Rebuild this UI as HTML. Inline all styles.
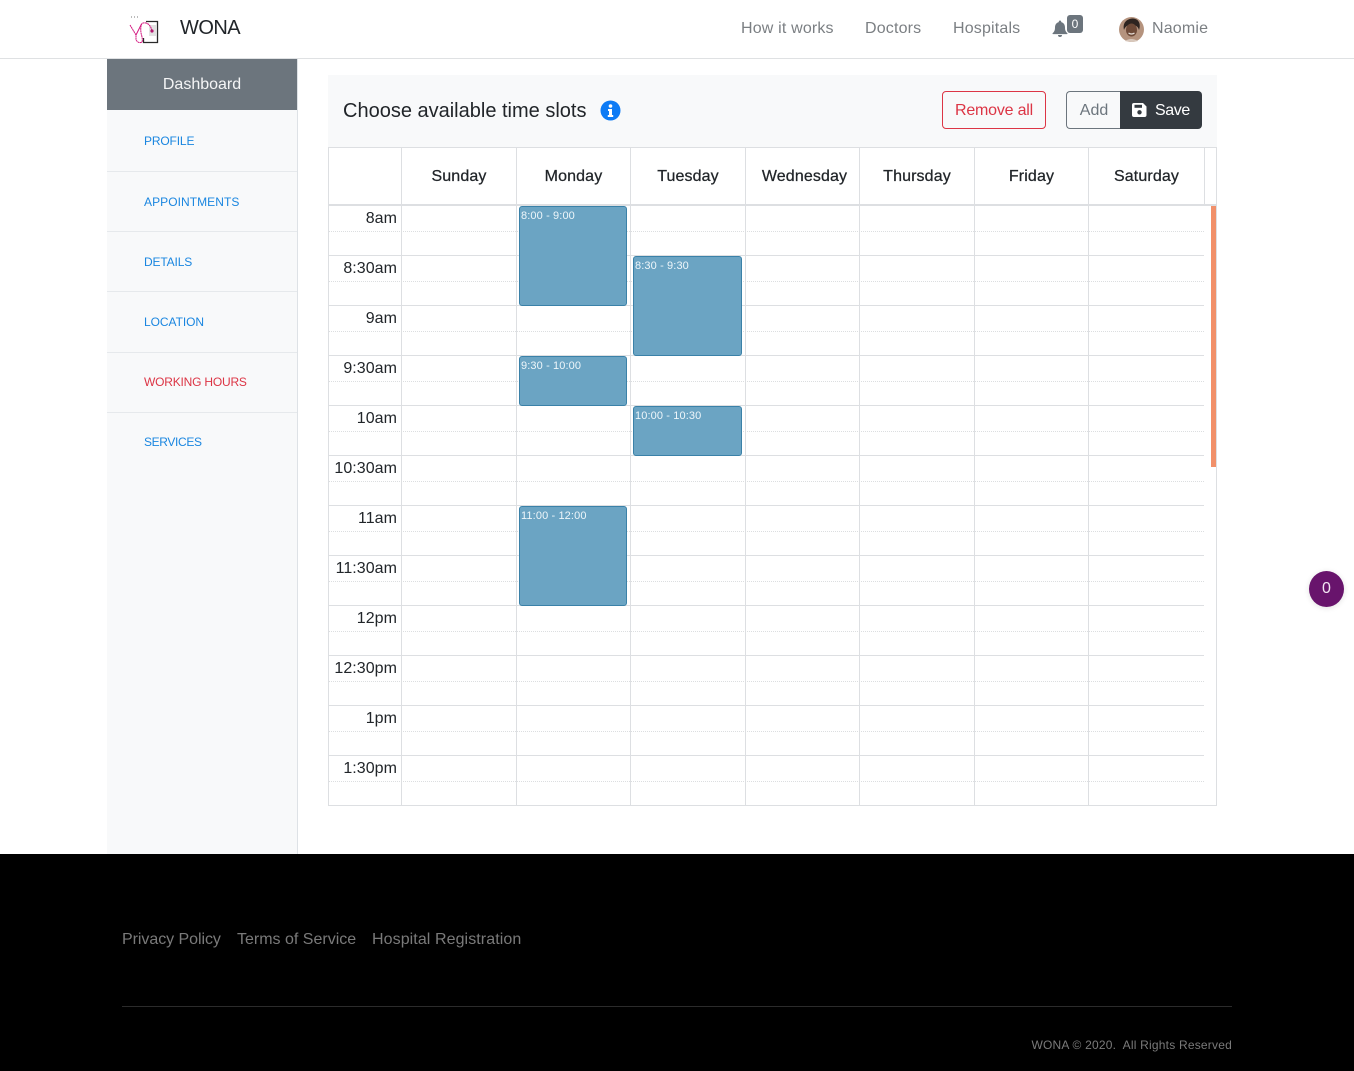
<!DOCTYPE html>
<html><head><meta charset="utf-8"><title>WONA</title>
<style>
*{box-sizing:border-box}
html,body{margin:0;padding:0}
body{width:1354px;height:1071px;position:relative;overflow:hidden;background:#fff;font-family:"Liberation Sans",sans-serif;color:#212529}
.a{position:absolute;white-space:nowrap;line-height:20px}
.nav{color:#7b7f83;font-size:16px;top:19px;letter-spacing:.17px}
.side{font-size:12px;left:144px;color:#1a86e0;letter-spacing:-.15px}
.day{top:167px;font-size:16px;text-align:center;color:#212529;-webkit-text-stroke:.25px #212529;letter-spacing:.12px}
.t{left:329px;width:68px;text-align:right;font-size:16px;color:#212529;letter-spacing:.05px}
.ev{position:absolute;background:#6ba4c3;border:1px solid #3a81a8;border-radius:3px;color:#eef6fa;font-size:11px;line-height:13px;padding:3px 1px 0;white-space:nowrap;letter-spacing:.12px}
.d{position:absolute;left:107px;width:190px;height:1px;background:#e6e9ec}
.f{color:#7a7a7a;font-size:16px;top:930px}
</style></head><body>

<!-- navbar -->
<div class="a" style="left:0;top:58px;width:1354px;height:1px;background:#dfe1e3"></div>
<svg class="a" style="left:128px;top:15px" width="32" height="30" viewBox="0 0 32 30">
<path d="M18 6.500H29.500V27.500H15.500V23" fill="none" stroke="#2a2a2a" stroke-width="1.300"/>
<rect x="21" y="10" width="7" height="11" fill="#e2e2e2"/>
<path d="M2 10 L8 20 V25 Q11 29 14 27 Q15 25 13 18 Q12 9 15 8 Q22 7 24 16" fill="none" stroke="#d3167f" stroke-width="1" stroke-dasharray="2 .4"/>
<path d="M13.500 9 L8 20" fill="none" stroke="#d3167f" stroke-width="1"/>
<circle cx="24" cy="16" r="1.600" fill="#b3186f"/>
<path d="M3 2h1M6 2h1M9 2h1" stroke="#777" stroke-width="1"/>
</svg>
<div class="a" style="left:180px;top:18px;font-size:20px;color:#212529;letter-spacing:-.55px">WONA</div>
<div class="a nav" style="left:741px;">How it works</div>
<div class="a nav" style="left:865px;">Doctors</div>
<div class="a nav" style="left:953px;">Hospitals</div>
<svg class="a" style="left:1052px;top:20px" width="16" height="17" viewBox="0 0 16 17"><path d="M8 0.500a1.300 1.300 0 0 1 1.200 1.600C11.700 2.700 13 4.800 13 7.500c0 3 .8 4.300 2.300 5.600.4.400.2 1-.3 1H1c-.5 0-.7-.6-.3-1C2.200 11.800 3 10.500 3 7.500 3 4.800 4.300 2.700 6.800 2.100A1.300 1.300 0 0 1 8 .5zM6 15h4a2 2 0 0 1-4 0z" fill="#6c757d"/></svg>
<div class="a" style="left:1067px;top:15px;width:16px;height:18px;background:#6c757d;border-radius:3px;color:#fff;font-size:12px;text-align:center;line-height:18px">0</div>
<svg class="a" style="left:1119px;top:17px" width="25" height="25" viewBox="0 0 25 25">
<circle cx="12.500" cy="12.500" r="12.500" fill="#b5937e"/>
<path d="M5 13C3 4 10 1.500 14 1.500 20 2 22 7 20 13 19 9 16 8 12 8 8 8 6 10 5 13z" fill="#2e2420"/>
<ellipse cx="12.500" cy="13" rx="5.500" ry="6.500" fill="#6e4a38"/>
<path d="M9.500 16q3 2 6 0" stroke="#e8e0da" stroke-width="1.200" fill="none"/>
<path d="M6 24q6-4 13 0q-6 2-13 0z" fill="#d8c8bc"/>
</svg>
<div class="a nav" style="left:1152px;">Naomie</div>

<!-- sidebar -->
<div class="a" style="left:107px;top:59px;width:191px;height:795px;background:#f8f9fa;border-right:1px solid #dee2e6"></div>
<div class="a" style="left:107px;top:59px;width:190px;height:51px;background:#6c757d;color:#f4f5f6;font-size:16px;line-height:52px;text-align:center">Dashboard</div>
<div class="a side" style="top:131px">PROFILE</div>
<div class="d" style="top:171px"></div>
<div class="a side" style="top:192px;letter-spacing:.06px">APPOINTMENTS</div>
<div class="d" style="top:231px"></div>
<div class="a side" style="top:252px">DETAILS</div>
<div class="d" style="top:291px"></div>
<div class="a side" style="top:312px;letter-spacing:-.05px">LOCATION</div>
<div class="d" style="top:352px"></div>
<div class="a side" style="top:372px;color:#dc3545;letter-spacing:-.2px">WORKING HOURS</div>
<div class="d" style="top:412px"></div>
<div class="a side" style="top:432px;letter-spacing:-.35px">SERVICES</div>

<!-- toolbar -->
<div class="a" style="left:328px;top:75px;width:889px;height:73px;background:#f8f9fa"></div>
<div class="a" style="left:343px;top:101px;font-size:20px;color:#212529">Choose available time slots</div>
<svg class="a" style="left:600px;top:100px" width="21" height="21" viewBox="0 0 21 21"><circle cx="10.500" cy="10.500" r="10" fill="#0d7bf5"/><circle cx="10.500" cy="6" r="1.800" fill="#fff"/><path d="M8 9h4v6h1.200v2H7.800v-2H9v-4H8z" fill="#fff"/></svg>
<div class="a" style="left:942px;top:91px;width:104px;height:38px;border:1px solid #dc3545;border-radius:4px;color:#dc3545;font-size:16px;line-height:37px;text-align:center;letter-spacing:-.2px">Remove all</div>
<div class="a" style="left:1066px;top:91px;width:55px;height:38px;border:1px solid #6c757d;border-right:0;border-radius:4px 0 0 4px;color:#6c757d;font-size:16px;line-height:37px;text-align:center">Add</div>
<div class="a" style="left:1120px;top:91px;width:82px;height:38px;background:#343a40;border-radius:0 4px 4px 0;color:#fff;font-size:16px;line-height:39px;padding-left:35px;letter-spacing:-.4px">Save</div>
<svg class="a" style="left:1132px;top:103px" width="15" height="14" viewBox="0 0 15 14"><path d="M2 0h9l3.500 3.500V12a2 2 0 0 1-2 2H2a2 2 0 0 1-2-2V2a2 2 0 0 1 2-2z" fill="#fff"/><rect x="2.500" y="1.800" width="7.500" height="3" fill="#343a40"/><circle cx="7.500" cy="9.300" r="2.200" fill="#343a40"/></svg>

<!-- grid -->
<svg class="a" style="left:0;top:0" width="1354" height="854" viewBox="0 0 1354 854" shape-rendering="crispEdges">
<rect x="328.500" y="147.500" width="888" height="658" fill="#fff" stroke="#dddfe2"/>
<g stroke="#dddfe2" stroke-width="1">
<path d="M401.500 148V805M516.500 148V805M630.500 148V805M745.500 148V805M859.500 148V805M974.500 148V805M1088.500 148V805M1204.500 148V205"/>
<path d="M329 255.500H1204M329 305.500H1204M329 355.500H1204M329 405.500H1204M329 455.500H1204M329 505.500H1204M329 555.500H1204M329 605.500H1204M329 655.500H1204M329 705.500H1204M329 755.500H1204"/>
</g>
<path d="M329 205H1216" stroke="#dddfe2" stroke-width="2"/>
<path d="M329 231.500H1204M329 281.500H1204M329 331.500H1204M329 381.500H1204M329 431.500H1204M329 481.500H1204M329 531.500H1204M329 581.500H1204M329 631.500H1204M329 681.500H1204M329 731.500H1204M329 781.500H1204" stroke="#dcdee0" stroke-width="1" stroke-dasharray="1 1"/>
<rect x="1211" y="206" width="5" height="261" fill="#f1906a"/>
</svg>

<div class="a day" style="left:402px;width:114px">Sunday</div>
<div class="a day" style="left:517px;width:113px">Monday</div>
<div class="a day" style="left:631px;width:114px">Tuesday</div>
<div class="a day" style="left:746px;width:117px">Wednesday</div>
<div class="a day" style="left:860px;width:114px">Thursday</div>
<div class="a day" style="left:975px;width:113px">Friday</div>
<div class="a day" style="left:1089px;width:115px">Saturday</div>

<div class="a t" style="top:209px">8am</div>
<div class="a t" style="top:259px">8:30am</div>
<div class="a t" style="top:309px">9am</div>
<div class="a t" style="top:359px">9:30am</div>
<div class="a t" style="top:409px">10am</div>
<div class="a t" style="top:459px">10:30am</div>
<div class="a t" style="top:509px">11am</div>
<div class="a t" style="top:559px">11:30am</div>
<div class="a t" style="top:609px">12pm</div>
<div class="a t" style="top:659px">12:30pm</div>
<div class="a t" style="top:709px">1pm</div>
<div class="a t" style="top:759px">1:30pm</div>

<div class="ev" style="left:519px;top:206px;width:108px;height:100px">8:00 - 9:00</div>
<div class="ev" style="left:519px;top:356px;width:108px;height:50px">9:30 - 10:00</div>
<div class="ev" style="left:519px;top:506px;width:108px;height:100px">11:00 - 12:00</div>
<div class="ev" style="left:633px;top:256px;width:109px;height:100px">8:30 - 9:30</div>
<div class="ev" style="left:633px;top:406px;width:109px;height:50px">10:00 - 10:30</div>

<!-- floating badge -->
<div class="a" style="left:1309px;top:571px;width:35px;height:36px;border-radius:50%;background:#68146c;color:#f3e6f3;font-size:16px;line-height:36px;text-align:center;box-shadow:0 1px 6px rgba(0,0,0,.12)">0</div>

<!-- footer -->
<div class="a" style="left:0;top:854px;width:1354px;height:217px;background:#000"></div>
<div class="a f" style="left:122px;letter-spacing:-.05px">Privacy Policy</div>
<div class="a f" style="left:237px">Terms of Service</div>
<div class="a f" style="left:372px;letter-spacing:.08px">Hospital Registration</div>
<div class="a" style="left:122px;top:1006px;width:1110px;height:1px;background:#2b2b2b"></div>
<div class="a" style="right:122px;top:1035px;font-size:12px;color:#7a7a7a;letter-spacing:.21px">WONA © 2020.&nbsp; All Rights Reserved</div>

</body></html>
